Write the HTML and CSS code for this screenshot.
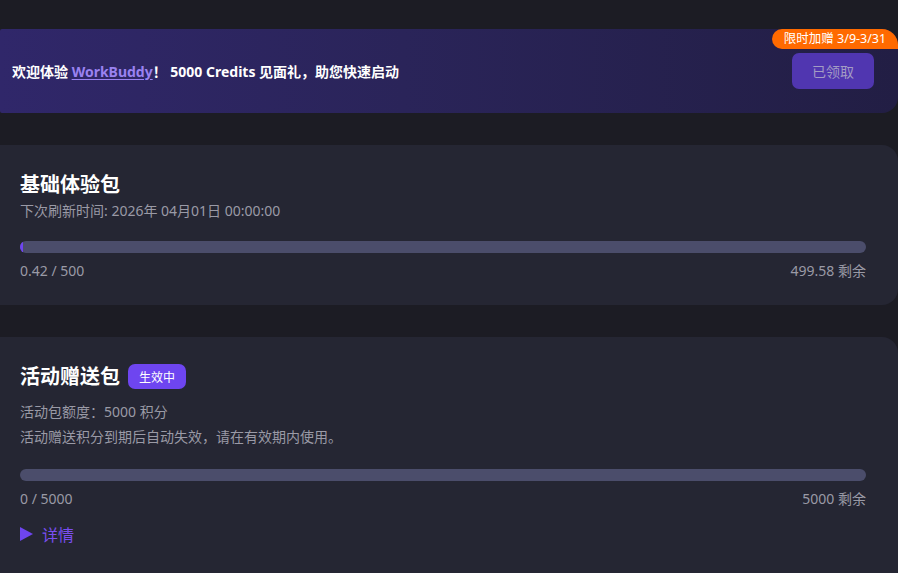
FILE: index.html
```html
<!DOCTYPE html>
<html lang="zh-CN">
<head>
<meta charset="utf-8">
<link rel="stylesheet" href="styles.css">
</head>
<body>
<div class="page">
  <section class="banner">
    <span class="tag">限时加赠 3/9-3/31</span>
    <p class="banner-text">欢迎体验 <a class="brand">WorkBuddy</a>！ 5000 Credits 见面礼，助您快速启动</p>
    <button class="claimed">已领取</button>
  </section>

  <section class="card card-basic">
    <h2 class="title">基础体验包</h2>
    <p class="sub">下次刷新时间: 2026年 04月01日 00:00:00</p>
    <div class="bar"><div class="fill" style="width:0.084%"></div></div>
    <div class="labels"><span>0.42 / 500</span><span>499.58 剩余</span></div>
  </section>

  <section class="card card-gift">
    <div class="title-row">
      <h2 class="title">活动赠送包</h2>
      <span class="badge">生效中</span>
    </div>
    <p class="info">活动包额度：5000 积分</p>
    <p class="info">活动赠送积分到期后自动失效，请在有效期内使用。</p>
    <div class="bar bar-gift"><div class="fill" style="width:0%"></div></div>
    <div class="labels"><span>0 / 5000</span><span>5000 剩余</span></div>
    <div class="details">
      <svg class="arrow" width="13" height="14" viewBox="0 0 13 14"><path d="M0 0 L13 7 L0 14 Z" fill="#6e45f0"/></svg>
      <span>详情</span>
    </div>
  </section>
</div>
</body>
</html>
```

FILE: styles.css
```css
* { box-sizing: border-box; }
html, body {
  margin: 0;
  padding: 0;
  background: #1c1c24;
  font-family: "Noto Sans", "Noto Sans CJK SC", sans-serif;
  overflow: hidden;
}
.page {
  padding-top: 29px;
  display: flex;
  flex-direction: column;
  gap: 32px;
}
.banner {
  position: relative;
  height: 84px;
  background: linear-gradient(90deg, #30276a 0%, #2a2459 45%, #221e44 100%);
  border-radius: 2px 16px 16px 2px;
  display: flex;
  align-items: center;
  justify-content: space-between;
  padding: 0 24px 0 12px;
}
.banner-text {
  margin: 0;
  color: #ffffff;
  font-size: 14px;
  font-weight: 700;
  padding-top: 0;
}
.brand {
  color: #9a82f0;
  text-decoration: underline;
  text-underline-offset: 2px;
}
.tag {
  position: absolute;
  top: 0;
  right: 0;
  height: 20px;
  width: 126px;
  background: #ff6a00;
  color: #ffffff;
  font-size: 12.5px;
  line-height: 20px;
  text-align: center;
  border-radius: 10px 16px 0 10px;
}
.claimed {
  width: 82px;
  height: 36px;
  background: #5036b0;
  color: #a39cc4;
  font-family: "Noto Sans CJK SC", sans-serif;
  font-size: 14px;
  border: none;
  border-radius: 7px;
}
.card {
  background: #252633;
  border-radius: 0 16px 16px 0;
  padding: 0 32px 0 20px;
}
.card-basic {
  height: 160px;
  padding-top: 26px;
}
.card-gift {
  height: 250px;
  padding-top: 26px;
}
.title {
  margin: 0;
  color: #ffffff;
  font-size: 20px;
  font-weight: 700;
  line-height: 26px;
  font-family: "Noto Sans CJK SC", sans-serif;
}
.sub {
  margin: 4px 0 0;
  color: #9a9aa6;
  font-size: 14px;
  line-height: 20px;
}
.bar {
  margin-top: 20px;
  height: 12px;
  border-radius: 6px;
  background: #4b4d6b;
  overflow: hidden;
}
.fill {
  height: 100%;
  min-width: 3px;
  background: #6e45f0;
}
.bar-gift .fill { min-width: 0; }
.labels {
  display: flex;
  justify-content: space-between;
  margin-top: 8px;
  color: #9a9aa6;
  font-size: 14px;
  line-height: 20px;
}
.title-row {
  display: flex;
  align-items: center;
  gap: 8px;
}
.badge {
  background: #6e45f0;
  color: #ffffff;
  font-size: 12px;
  height: 25px;
  line-height: 25px;
  padding: 0 11px;
  border-radius: 7px;
  font-family: "Noto Sans CJK SC", sans-serif;
}
.info {
  margin: 0;
  color: #9a9aa6;
  font-size: 14px;
  line-height: 25px;
}
.title-row + .info { margin-top: 10px; }
.card-gift .bar { margin-top: 20px; }
.details {
  margin-top: 15px;
  display: flex;
  align-items: center;
  gap: 9px;
  color: #7a4ef0;
  font-size: 16px;
  line-height: 20px;
  font-family: "Noto Sans CJK SC", sans-serif;
}
.arrow {
  display: block;
}
```
